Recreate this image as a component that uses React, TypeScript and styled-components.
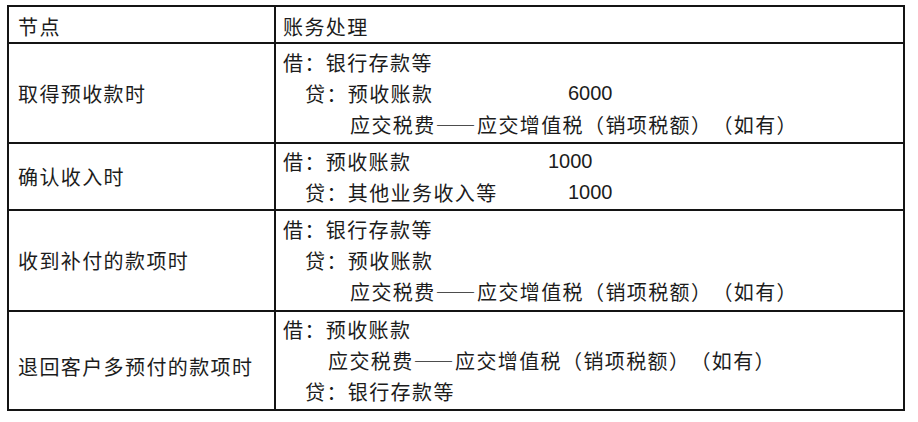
import React from "react";
import styled, { createGlobalStyle } from "styled-components";

type Line = {
  text: string;
  indent?: number;
  labelWidth?: number;
  amount?: string;
};

type Row = {
  node: string;
  height: number;
  nodeOffset?: number;
  lines: Line[];
};

const TAX = "应交税费——应交增值税（销项税额）（如有）";

const rows: Row[] = [
  {
    node: "取得预收款时",
    height: 100,
    lines: [
      { text: "借：银行存款等" },
      { text: "贷：预收账款", indent: 22, labelWidth: 263, amount: "6000" },
      { text: TAX, indent: 67 },
    ],
  },
  {
    node: "确认收入时",
    height: 67,
    lines: [
      { text: "借：预收账款", labelWidth: 265, amount: "1000" },
      { text: "贷：其他业务收入等", indent: 22, labelWidth: 263, amount: "1000" },
    ],
  },
  {
    node: "收到补付的款项时",
    height: 101,
    lines: [
      { text: "借：银行存款等" },
      { text: "贷：预收账款", indent: 22 },
      { text: TAX, indent: 67 },
    ],
  },
  {
    node: "退回客户多预付的款项时",
    height: 99,
    nodeOffset: 12,
    lines: [
      { text: "借：预收账款" },
      { text: TAX, indent: 45 },
      { text: "贷：银行存款等", indent: 22 },
    ],
  },
];

const App: React.FC = () => {
  return (
    <>
      <GlobalStyle />
      <Page>
        <Table rows={[35, ...rows.map((r) => r.height)]}>
          <NodeCell first offset={3}>节点</NodeCell>
          <EntryCell first>
            <HeaderText>账务处理</HeaderText>
          </EntryCell>
          {rows.map((row) => (
            <React.Fragment key={row.node}>
              <NodeCell offset={row.nodeOffset}>{row.node}</NodeCell>
              <EntryCell>
                {row.lines.map((line, i) => (
                  <EntryLine key={i} indent={line.indent || 0}>
                    <Label width={line.labelWidth}>{line.text}</Label>
                    {line.amount && <Amount>{line.amount}</Amount>}
                  </EntryLine>
                ))}
              </EntryCell>
            </React.Fragment>
          ))}
        </Table>
      </Page>
    </>
  );
};

const GlobalStyle = createGlobalStyle`
  html, body {
    margin: 0;
    padding: 0;
    background: #ffffff;
  }
  body {
    font-family: "Noto Sans CJK SC", "Noto Sans", sans-serif;
    color: #1c1c1c;
    text-spacing-trim: space-all;
  }
`;

const Page = styled.div`
  width: 918px;
  height: 422px;
  padding: 5px 0 0 7px;
  box-sizing: border-box;
  background: #ffffff;
`;

const Table = styled.div<{ rows: number[] }>`
  display: grid;
  width: 898px;
  box-sizing: border-box;
  grid-template-columns: 267px 1fr;
  grid-template-rows: ${(props) => props.rows.map((h) => `${h}px`).join(" ")};
  border: 2px solid #141414;
`;

const NodeCell = styled.div<{ first?: boolean; offset?: number }>`
  display: flex;
  align-items: center;
  box-sizing: border-box;
  padding: ${(props) => props.offset || 0}px 0 0 9px;
  border-right: 2px solid #141414;
  border-top: ${(props) => (props.first ? "none" : "2px solid #141414")};
  font-size: 20px;
  letter-spacing: 1.4px;
  line-height: 31px;
  white-space: nowrap;
`;

const EntryCell = styled.div<{ first?: boolean }>`
  display: flex;
  flex-direction: column;
  justify-content: center;
  box-sizing: border-box;
  padding: ${(props) => (props.first ? "3px" : "0")} 0 0 7px;
  border-top: ${(props) => (props.first ? "none" : "2px solid #141414")};
`;

const HeaderText = styled.span`
  font-size: 20px;
  letter-spacing: 1.4px;
  line-height: 31px;
`;

const EntryLine = styled.div<{ indent: number }>`
  display: flex;
  align-items: center;
  height: 31px;
  padding-left: ${(props) => props.indent}px;
  white-space: nowrap;
`;

const Label = styled.span<{ width?: number }>`
  font-size: 20px;
  letter-spacing: 1.4px;
  line-height: 31px;
  font-feature-settings: "fwid" 1;
  ${(props) => (props.width ? `width: ${props.width}px; flex: none;` : "")}
`;

const Amount = styled.span`
  font-family: "Liberation Sans", "Noto Sans", sans-serif;
  font-size: 20px;
  line-height: 31px;
  color: #1c1c1c;
`;

export default App;
